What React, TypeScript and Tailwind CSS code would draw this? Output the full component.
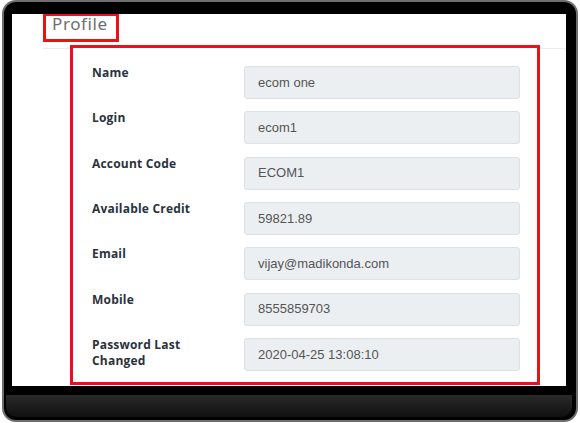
const fields: Array<{ label: string; value: string }> = [
  { label: 'Name', value: 'ecom one' },
  { label: 'Login', value: 'ecom1' },
  { label: 'Account Code', value: 'ECOM1' },
  { label: 'Available Credit', value: '59821.89' },
  { label: 'Email', value: 'vijay@madikonda.com' },
  { label: 'Mobile', value: '8555859703' },
  { label: 'Password Last Changed', value: '2020-04-25 13:08:10' },
];

function FieldRow({ label, value }: { label: string; value: string }) {
  return (
    <div className="flex items-start">
      <div className="w-[152px] -mt-[1px] pr-[40px] text-[12px] font-bold leading-[16px] tracking-[0.2px] text-[#2a323c] [font-family:'Open_Sans',sans-serif]">
        {label}
      </div>
      <div className="flex h-[33px] w-[276px] items-center rounded-[3px] border border-[#dde1e4] bg-[#eceff1] pl-[13px] text-[13px] text-[#555] [font-family:'Liberation_Sans',Arial,sans-serif]">
        {value}
      </div>
    </div>
  );
}

export default function App() {
  return (
    <div className="h-[423px] w-[580px] overflow-hidden bg-white">
      <div className="ml-[2px] flex h-[422px] w-[576px] flex-col rounded-[14px] border-2 border-[#6e6e6e] bg-black pl-[8px] pr-[10px] pt-[12px]">
        <div className="flex h-[372px] flex-col bg-white">
          <div className="pl-[31px]">
            <div className="flex h-[28px] w-[76px] items-start border-[3px] border-t-[2px] border-[#e8121b] pl-[6px]">
              <span className="-mt-[2px] text-[17px] font-normal leading-[20px] tracking-[0.6px] text-[#6c6f73] [font-family:'Noto_Sans',sans-serif]">
                Profile
              </span>
            </div>
          </div>
          <div className="ml-[31px] mt-[6px] h-px bg-[#ececec]" />
          <div className="relative -mt-[4px] ml-[58px] h-[340px] w-[470px] border-[3px] border-[#e8121b] bg-white pl-[19px] pt-[18px]">
            <div className="flex flex-col gap-[12.33px]">
              {fields.map((f) => (
                <FieldRow key={f.label} label={f.label} value={f.value} />
              ))}
            </div>
          </div>
        </div>
        <div className="h-[9px]" />
        <div className="-mx-[6px] h-[22px] rounded-b-[10px] bg-gradient-to-b from-[#2a2a2a] to-[#101010]" />
      </div>
    </div>
  );
}
